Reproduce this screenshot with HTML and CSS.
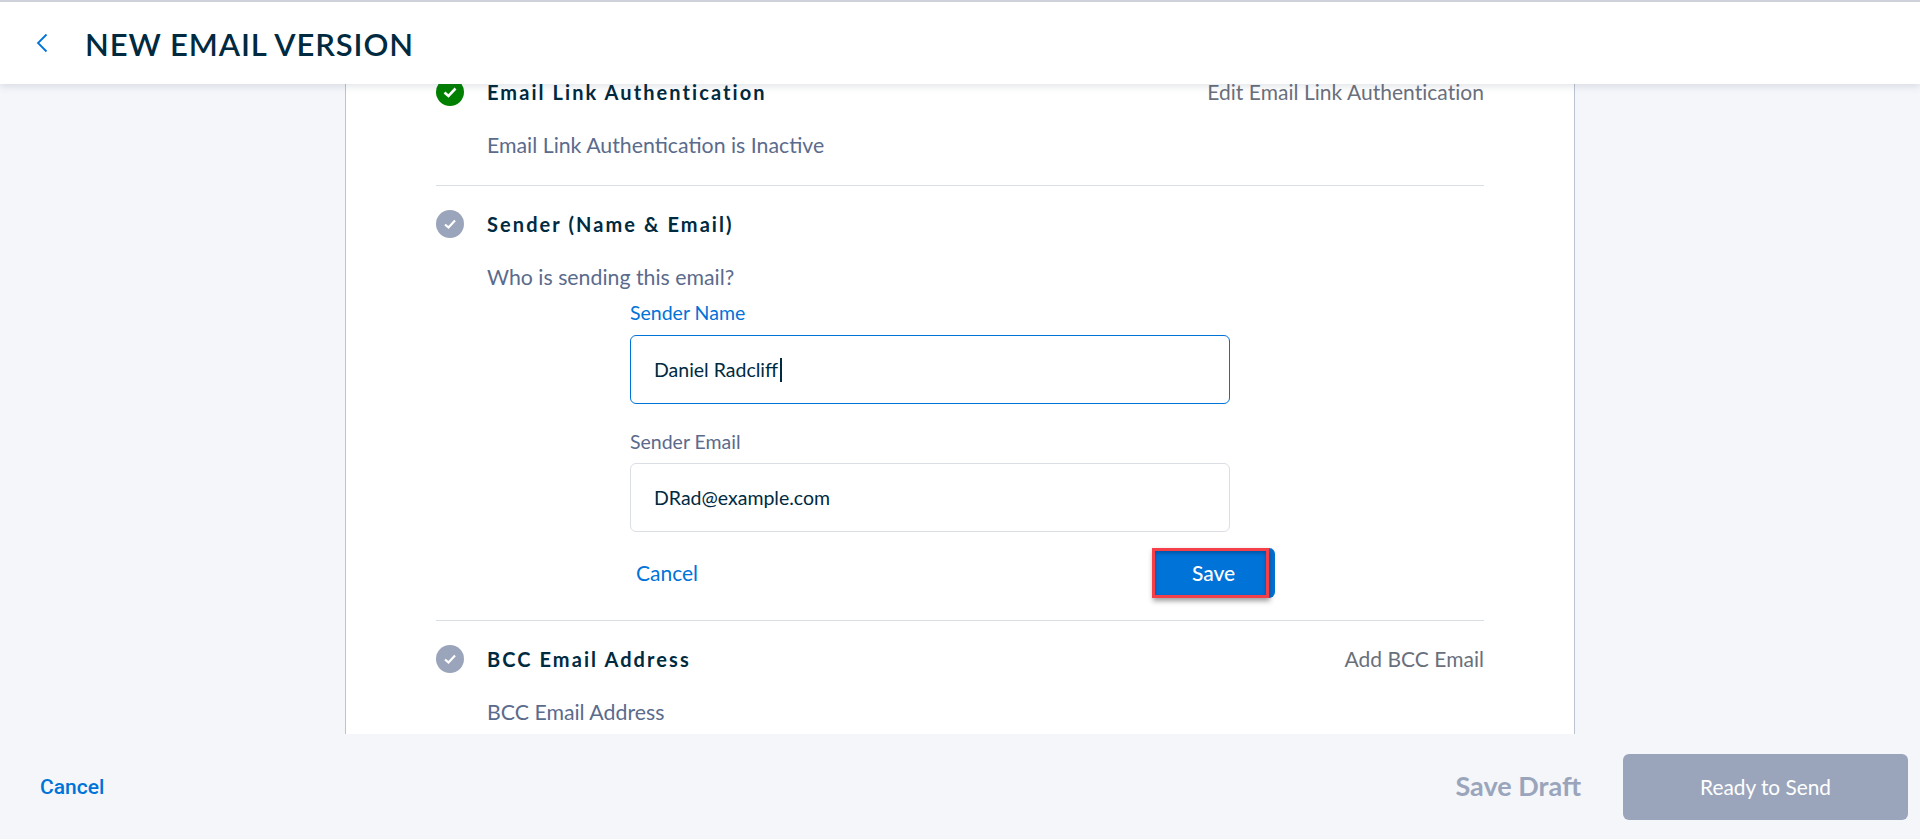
FILE: index.html
```html
<!DOCTYPE html>
<html>
<head>
    <meta charset="utf-8">
    <meta name="viewport" content="width=device-width, initial-scale=1.0">
    <title>New Email Version</title>
    <link rel="stylesheet" href="styles.css">
</head>
<body>
    <div class="page">
        <header class="topbar">
            <svg class="back" width="14" height="20" viewBox="0 0 14 20"><path d="M11.5 1.5 L3 10 L11.5 18.5" fill="none" stroke="#0073d9" stroke-width="1.8"/></svg>
            <h1>NEW EMAIL VERSION</h1>
        </header>

        <main class="content">
            <div class="card">
                <section class="row">
                    <div class="row-head">
                        <svg class="status" width="28" height="28" viewBox="0 0 28 28"><circle cx="14" cy="14" r="14" fill="#008000"/><path d="M8.5 14.5 L12.5 18 L19.5 10.5" fill="none" stroke="#fff" stroke-width="2.6"/></svg>
                        <h2>Email Link Authentication</h2>
                        <a class="row-action">Edit Email Link Authentication</a>
                    </div>
                    <p class="row-sub">Email Link Authentication is Inactive</p>
                </section>

                <section class="row row-sender">
                    <div class="row-head">
                        <svg class="status" width="28" height="28" viewBox="0 0 28 28"><circle cx="14" cy="14" r="14" fill="#9aa5bc"/><path d="M9 14.5 L12.5 17.5 L19 10.5" fill="none" stroke="#fff" stroke-width="2.2"/></svg>
                        <h2>Sender (Name &amp; Email)</h2>
                    </div>
                    <p class="row-sub">Who is sending this email?</p>
                    <form class="sender-form">
                        <label class="field-label active">Sender Name</label>
                        <div class="field focused">Daniel Radcliff<span class="caret"></span></div>
                        <label class="field-label second">Sender Email</label>
                        <div class="field">DRad@example.com</div>
                        <div class="form-actions">
                            <a class="form-cancel">Cancel</a>
                            <div class="save-wrap">
                                <button type="button" class="save">Save</button>
                                <span class="highlight"></span>
                            </div>
                        </div>
                    </form>
                </section>

                <section class="row">
                    <div class="row-head">
                        <svg class="status" width="28" height="28" viewBox="0 0 28 28"><circle cx="14" cy="14" r="14" fill="#9aa5bc"/><path d="M9 14.5 L12.5 17.5 L19 10.5" fill="none" stroke="#fff" stroke-width="2.2"/></svg>
                        <h2>BCC Email Address</h2>
                        <a class="row-action">Add BCC Email</a>
                    </div>
                    <p class="row-sub">BCC Email Address</p>
                </section>
            </div>
        </main>

        <footer class="footer">
            <a class="footer-cancel">Cancel</a>
            <a class="save-draft">Save Draft</a>
            <button type="button" class="ready">Ready to Send</button>
        </footer>
    </div>
</body>
</html>
```

FILE: styles.css
```css
* {
    box-sizing: border-box;
}

html, body {
    height: 100%;
}

body {
    margin: 0;
    background: #f4f6fa;
    font-family: 'Lato', 'Liberation Sans', sans-serif;
    color: #002a3f;
}

.page {
    height: 100%;
    display: flex;
    flex-direction: column;
    overflow: hidden;
}

.topbar {
    position: relative;
    z-index: 2;
    flex: 0 0 84px;
    display: flex;
    align-items: center;
    padding: 2px 0 0 35px;
    background: #fff;
    border-top: 2px solid #cfd2da;
    box-shadow: 0 2px 8px rgba(60, 70, 100, 0.16);
}

.back {
    margin-right: 36px;
    margin-top: -2px;
}

.topbar h1 {
    margin: 0;
    font-size: 31px;
    font-weight: 600;
    letter-spacing: 0.9px;
    color: #002a3f;
}

.content {
    flex: 1;
    overflow: hidden;
    padding: 0 345px;
}

.card {
    height: calc(100% + 6px);
    width: 1230px;
    margin-top: -6px;
    padding: 0 90px;
    background: #fff;
    border-left: 1px solid #bcc3d0;
    border-right: 1px solid #bcc3d0;
    overflow: hidden;
}

.row {
    height: 107px;
}

.row + .row {
    border-top: 1px solid #dcdee6;
    padding-top: 24px;
    height: auto;
}

.row-sender {
    height: 435px !important;
}

.row-head {
    display: flex;
    align-items: center;
    height: 28px;
    line-height: 20px;
}

.status {
    flex: none;
    margin-right: 23px;
}

.row-head h2 {
    margin: 0;
    font-size: 20px;
    font-weight: 700;
    letter-spacing: 2.08px;
    color: #002a3f;
}

.row-action {
    margin-left: auto;
    margin-top: -1px;
    font-size: 21px;
    letter-spacing: 0.03px;
    color: #6a6f7c;
}

.row-sub {
    margin: 27px 0 0 51px;
    font-size: 21.3px;
    line-height: 25px;
    color: #5a6b8c;
}

.sender-form {
    width: 600px;
    margin: 0 0 0 194px;
}

.field-label {
    display: block;
    height: 45px;
    padding-top: 11px;
    font-size: 19.5px;
    line-height: 24px;
    color: #5a6b8c;
}

.field-label.active {
    color: #0073d9;
}

.field-label.second {
    height: 59px;
    padding-top: 26px;
}

.field {
    display: flex;
    align-items: center;
    height: 69px;
    padding: 0 23px;
    background: #fff;
    border: 1px solid #dcdee6;
    border-radius: 6px;
    font-size: 19.5px;
    color: #002a3f;
}

.field.focused {
    border-color: #0073d9;
}

.caret {
    display: inline-block;
    width: 2px;
    height: 24px;
    margin-left: 2px;
    background: #002a3f;
}

.form-actions {
    display: flex;
    align-items: center;
    justify-content: space-between;
    width: 645px;
    height: 50px;
    margin-top: 16px;
    padding-left: 6px;
}

.form-cancel {
    margin-top: -2px;
    font-size: 21px;
    color: #0073d9;
}

.save-wrap {
    position: relative;
    width: 123px;
    height: 50px;
}

.save {
    width: 100%;
    height: 100%;
    padding: 0 0 2px;
    border: 0;
    border-radius: 6px;
    background: #0073d9;
    color: #fff;
    font-family: inherit;
    font-size: 21px;
    font-weight: 500;
}

.highlight {
    position: absolute;
    top: 0;
    left: 0;
    width: 117px;
    height: 50px;
    border: 3px solid #f5404a;
    box-shadow: 1px 3px 5px rgba(40, 40, 40, 0.45), inset 0 2px 4px rgba(0, 40, 90, 0.45);
}

.footer {
    flex: 0 0 105px;
    display: flex;
    align-items: center;
    padding: 0 12px 0 40px;
    background: #f4f6fa;
}

.footer-cancel {
    font-family: 'Roboto', 'Liberation Sans', sans-serif;
    font-size: 21px;
    font-weight: 500;
    color: #0073d9;
    margin-right: auto;
}

.save-draft {
    margin-top: -2px;
    margin-right: 42px;
    font-size: 27px;
    font-weight: 700;
    color: #9aa5bc;
}

.ready {
    width: 285px;
    height: 66px;
    border: 0;
    border-radius: 6px;
    background: #9aa5bc;
    color: #fff;
    font-family: inherit;
    font-size: 20.8px;
}
```
